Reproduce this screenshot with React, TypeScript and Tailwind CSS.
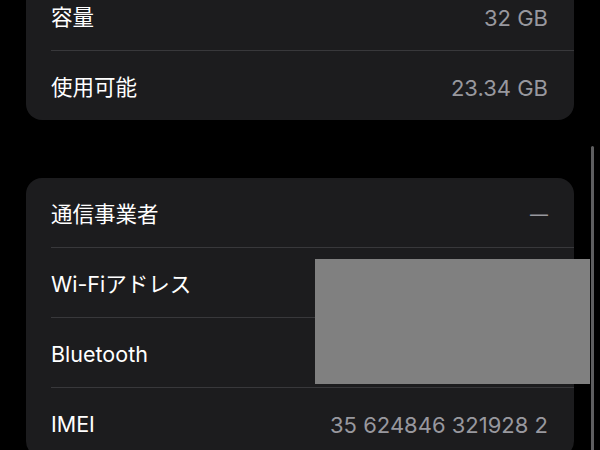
import React from "react";

const font = { fontFamily: 'Inter, "Noto Sans CJK JP", "Noto Sans", sans-serif' };

function Row({ label, value, dash }: { label: string; value?: string; dash?: boolean }) {
  return (
    <div className="flex h-[69px] items-center justify-between pl-[25px] pr-[26px] pt-[4px]" style={font}>
      <span className="text-[21.5px] leading-none font-normal text-white">{label}</span>
      {dash ? (
        <span className="text-[18px] leading-none font-normal text-[#98989e]">—</span>
      ) : (
        <span className="text-[22px] leading-none font-normal text-[#98989e]">{value}</span>
      )}
    </div>
  );
}

function Divider() {
  return <div className="ml-[25px] h-px bg-[#38383b]" />;
}

export default function App() {
  return (
    <div className="relative h-[450px] w-[600px] overflow-hidden bg-black">
      <div className="mt-[-19px] flex flex-col gap-[58px] px-[26px]">
        <div className="overflow-hidden rounded-[16px] bg-[#1c1c1e]">
          <Row label="容量" value="32 GB" />
          <Divider />
          <Row label="使用可能" value="23.34 GB" />
        </div>
        <div className="overflow-hidden rounded-[16px] bg-[#1c1c1e]">
          <Row label="通信事業者" dash />
          <Divider />
          <Row label="Wi-Fiアドレス" value="" />
          <Divider />
          <Row label="Bluetooth" value="" />
          <Divider />
          <Row label="IMEI" value="35 624846 321928 2" />
        </div>
      </div>
      <div className="absolute left-[591px] top-[146px] h-[320px] w-[3px] rounded-full bg-[#5e5e60]" />
      <div className="absolute left-[315px] top-[259px] h-[125px] w-[275px] bg-[#808080]" />
    </div>
  );
}
